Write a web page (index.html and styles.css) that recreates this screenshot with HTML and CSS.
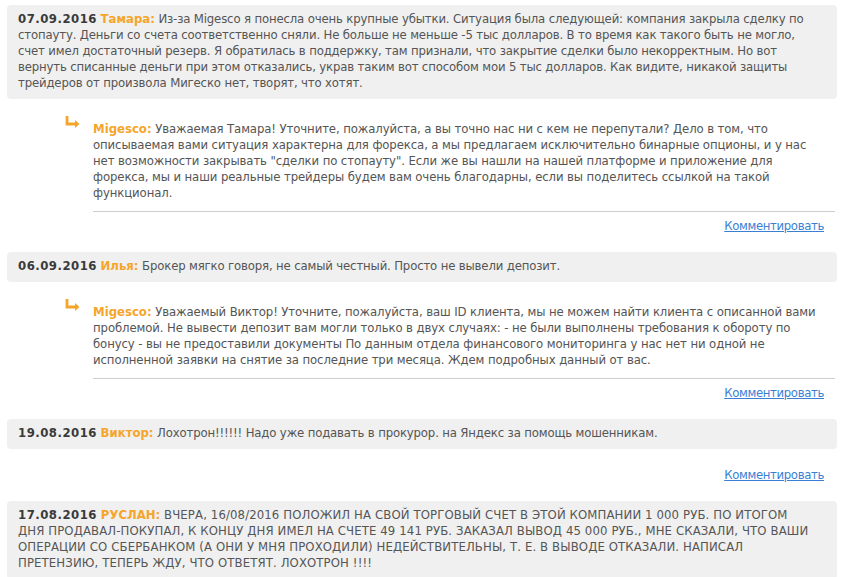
FILE: index.html
```html
<!DOCTYPE html>
<html lang="ru">
  <head>
    <meta charset="UTF-8" />
    <meta name="viewport" content="width=device-width, initial-scale=1.0" />
    <title>Отзывы</title>
    <link rel="stylesheet" href="styles.css">
  </head>
  <body>
    <div class="comments">

      <div class="comment">
        <div class="comment-box">
          <span class="date">07.09.2016</span>
          <span class="author">Тамара:</span>
          Из-за Migesco я понесла очень крупные убытки. Ситуация была следующей: компания закрыла сделку по стопауту. Деньги со счета соответственно сняли. Не больше не меньше -5 тыс долларов. В то время как такого быть не могло, счет имел достаточный резерв. Я обратилась в поддержку, там признали, что закрытие сделки было некорректным. Но вот вернуть списанные деньги при этом отказались, украв таким вот способом мои 5 тыс долларов. Как видите, никакой защиты трейдеров от произвола Мигеско нет, творят, что хотят.
        </div>
        <div class="reply">
          <svg class="reply-icon" width="15" height="12" viewBox="0 0 15 12">
            <path d="M2 0 V8 H11" fill="none" stroke="#f5a52a" stroke-width="2.8" />
            <path d="M10 4 L14.5 8 L10 12 Z" fill="#f5a52a" />
          </svg>
          <div class="reply-body">
            <span class="author">Migesco:</span>
            Уважаемая Тамара! Уточните, пожалуйста, а вы точно нас ни с кем не перепутали? Дело в том, что описываемая вами ситуация характерна для форекса, а мы предлагаем исключительно бинарные опционы, и у нас нет возможности закрывать "сделки по стопауту". Если же вы нашли на нашей платформе и приложение для форекса, мы и наши реальные трейдеры будем вам очень благодарны, если вы поделитесь ссылкой на такой функционал.
          </div>
        </div>
        <div class="comment-foot"><a href="#">Комментировать</a></div>
      </div>

      <div class="comment">
        <div class="comment-box">
          <span class="date">06.09.2016</span>
          <span class="author">Илья:</span>
          Брокер мягко говоря, не самый честный. Просто не вывели депозит.
        </div>
        <div class="reply">
          <svg class="reply-icon" width="15" height="12" viewBox="0 0 15 12">
            <path d="M2 0 V8 H11" fill="none" stroke="#f5a52a" stroke-width="2.8" />
            <path d="M10 4 L14.5 8 L10 12 Z" fill="#f5a52a" />
          </svg>
          <div class="reply-body">
            <span class="author">Migesco:</span>
            Уважаемый Виктор! Уточните, пожалуйста, ваш ID клиента, мы не можем найти клиента с описанной вами проблемой. Не вывести депозит вам могли только в двух случаях: - не были выполнены требования к обороту по бонусу - вы не предоставили документы По данным отдела финансового мониторинга у нас нет ни одной не исполненной заявки на снятие за последние три месяца. Ждем подробных данный от вас.
          </div>
        </div>
        <div class="comment-foot"><a href="#">Комментировать</a></div>
      </div>

      <div class="comment">
        <div class="comment-box">
          <span class="date">19.08.2016</span>
          <span class="author">Виктор:</span>
          Лохотрон!!!!!! Надо уже подавать в прокурор. на Яндекс за помощь мошенникам.
        </div>
        <div class="comment-foot"><a href="#">Комментировать</a></div>
      </div>

      <div class="comment">
        <div class="comment-box comment-box--caps">
          <span class="date">17.08.2016</span>
          <span class="author">РУСЛАН:</span>
          ВЧЕРА, 16/08/2016 ПОЛОЖИЛ НА СВОЙ ТОРГОВЫЙ СЧЕТ В ЭТОЙ КОМПАНИИ 1 000 РУБ. ПО ИТОГОМ ДНЯ ПРОДАВАЛ-ПОКУПАЛ, К КОНЦУ ДНЯ ИМЕЛ НА СЧЕТЕ 49 141 РУБ. ЗАКАЗАЛ ВЫВОД 45 000 РУБ., МНЕ СКАЗАЛИ, ЧТО ВАШИ ОПЕРАЦИИ СО СБЕРБАНКОМ (А ОНИ У МНЯ ПРОХОДИЛИ) НЕДЕЙСТВИТЕЛЬНЫ, Т. Е. В ВЫВОДЕ ОТКАЗАЛИ. НАПИСАЛ ПРЕТЕНЗИЮ, ТЕПЕРЬ ЖДУ, ЧТО ОТВЕТЯТ. ЛОХОТРОН !!!!
        </div>
      </div>

    </div>
  </body>
</html>
```

FILE: styles.css
```css
body {
  font-family: "DejaVu Sans Condensed", "DejaVu Sans", sans-serif;
  font-size: 13px;
  line-height: 16px;
  color: #555;
  background-color: #fff;
  margin: 0;
  padding: 0;
}

.comments {
  padding: 5px 5px 0 7px;
}

.comment {
  margin-bottom: 18px;
}

.comment-box {
  background-color: #f0f0f0;
  border-radius: 4px;
  padding: 6px 22px 8px 11px;
  letter-spacing: -0.15px;
}

/* upper-case posts run a little wider */
.comment-box--caps {
  letter-spacing: 0.12px;
}

.date {
  font-weight: bold;
  color: #3a3a3a;
  letter-spacing: 0.5px;
}

.author {
  font-weight: bold;
  color: #f5a52a;
  letter-spacing: 0;
}

.reply {
  display: flex;
  align-items: flex-start;
  gap: 13px;
  margin: 22px 2px 0 58px;
}

.reply-icon {
  flex-shrink: 0;
  margin-top: -5px;
}

.reply-body {
  flex: 1;
  padding-right: 15px;
  padding-bottom: 10px;
  border-bottom: 1px solid #cfcfcf;
  letter-spacing: -0.1px;
}

.comment-foot {
  text-align: right;
  padding-right: 13px;
}

.comment-box + .comment-foot {
  margin-top: 18px;
}

.reply + .comment-foot {
  margin-top: 6px;
}

.comment-foot a {
  color: #3b7fd4;
  text-decoration: underline;
  letter-spacing: -0.35px;
}
```
